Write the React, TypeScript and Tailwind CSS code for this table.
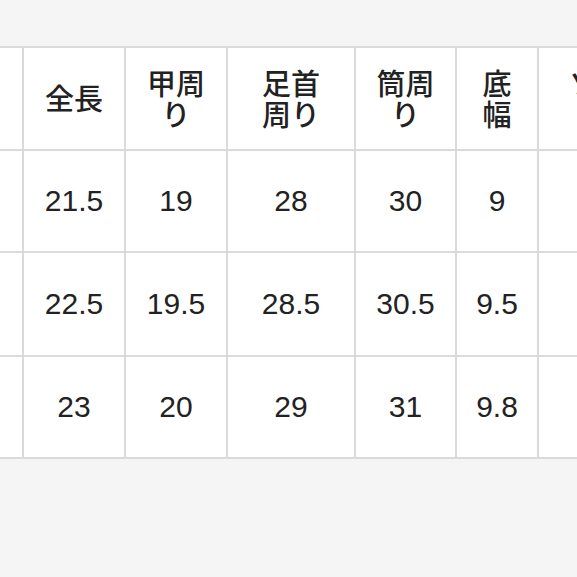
import React from "react";

const headers: React.ReactNode[] = [
  "",
  "全長",
  <>甲周<br />り</>,
  <>足首<br />周り</>,
  <>筒周<br />り</>,
  <>底<br />幅</>,
  <>ソー<br />ル</>,
];

const rows: string[][] = [
  ["", "21.5", "19", "28", "30", "9", ""],
  ["", "22.5", "19.5", "28.5", "30.5", "9.5", ""],
  ["", "23", "20", "29", "31", "9.8", ""],
];

const rowHeights = ["h-[100px]", "h-[102px]", "h-[100px]"];

export default function App() {
  return (
    <div className="w-[577px] h-[577px] bg-[#f5f5f5] overflow-hidden pt-[46px]">
      <div className="ml-[-80px] w-max bg-[#dadada] p-[2px] grid grid-cols-[100px_100px_100px_126px_99px_80px_118px] gap-[2px] text-[#222]">
        {headers.map((h, i) => (
          <div
            key={"h" + i}
            className="h-[101px] bg-white flex items-center justify-center text-center text-[29px] leading-[31px] font-medium pb-[2px]"
            style={{ fontFamily: '"Noto Sans CJK JP", "Noto Sans", sans-serif' }}
          >
            <div>{h}</div>
          </div>
        ))}
        {rows.map((r, ri) =>
          r.map((c, ci) => (
            <div
              key={ri + "-" + ci}
              className={`${rowHeights[ri]} bg-white flex items-center justify-center text-[30px] leading-none`}
              style={{ fontFamily: '"Liberation Sans", Arial, sans-serif' }}
            >
              {c}
            </div>
          ))
        )}
      </div>
    </div>
  );
}
